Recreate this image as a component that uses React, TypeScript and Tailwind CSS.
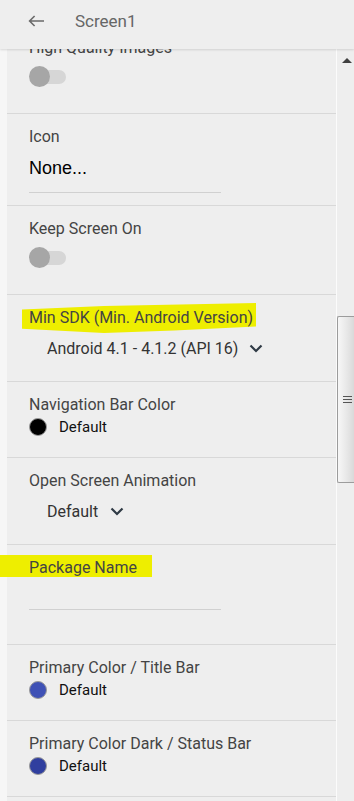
import React from "react";

const Label = ({ children }: { children: React.ReactNode }) => (
  <div className="pt-[13px] text-[16px] leading-[19px] text-[#444444]">{children}</div>
);

const Switch = () => (
  <div className="mt-[9px] relative w-[37px] h-[21px] flex items-center">
    <div className="absolute left-[1px] top-[4px] w-[36px] h-[14px] rounded-full bg-[#d6d6d6]" />
    <div className="relative w-[21px] h-[21px] rounded-full bg-[#a6a6a6]" />
  </div>
);

const Chevron = () => (
  <svg width="14" height="9" viewBox="0 0 14 9" className="shrink-0">
    <path d="M1.5 1.5L7 7L12.5 1.5" fill="none" stroke="#2f3a45" strokeWidth="2.2" />
  </svg>
);

const ColorRow = ({ color }: { color: string }) => (
  <div className="mt-[4px] flex items-center h-[18px]">
    <div className="w-[18px] h-[18px] rounded-full border border-[#9a9a9a]" style={{ backgroundColor: color }} />
    <span className="ml-[12px] text-[15px] leading-[18px] text-[#111111]">Default</span>
  </div>
);

export default function App() {
  return (
    <div className="w-[354px] h-[801px] overflow-hidden bg-[#eeeeee] flex flex-col font-['Roboto',sans-serif]">
      <header className="h-[49px] shrink-0 flex items-start relative z-10 bg-[#eeeeee] shadow-[0_1px_2px_rgba(0,0,0,0.12)]">
        <div className="ml-[28px] mt-[15px]">
          <svg width="17" height="12" viewBox="0 0 17 12">
            <path d="M16 6H1.6M6.6 1L1.6 6L6.6 11" fill="none" stroke="#6a6a6a" strokeWidth="1.6" />
          </svg>
        </div>
        <div className="ml-[30px] mt-[11px] text-[17px] leading-[20px] text-[#666666]">Screen1</div>
      </header>
      <div className="flex flex-1 min-h-0 overflow-hidden">
        <div className="w-[7px] shrink-0 bg-[#f6f6f6]" />
        <div className="w-[329px] shrink-0 relative">
          <div className="-mt-[24px] h-[89px] border-b border-[#d8d8d8] pl-[22px]">
            <Label>High Quality Images</Label>
            <Switch />
          </div>
          <div className="h-[92px] border-b border-[#d8d8d8] pl-[22px]">
            <Label>Icon</Label>
            <div className="mt-[12px] text-[18px] leading-[21px] text-black font-['Liberation_Sans',sans-serif]">None...</div>
            <div className="mt-[13px] w-[192px] h-px bg-[#d0d0d0]" />
          </div>
          <div className="h-[89px] border-b border-[#d8d8d8] pl-[22px]">
            <Label>Keep Screen On</Label>
            <Switch />
          </div>
          <div className="h-[87px] border-b border-[#d8d8d8] pl-[22px]">
            <Label>
              <span className="relative inline-block">
                <span className="absolute -left-[7px] -right-[3px] -top-[5px] -bottom-[6px] bg-[#eeee00] [clip-path:polygon(0_22%,35%_10%,100%_0,100%_78%,65%_92%,35%_100%,0_86%)]" />
                <span className="relative">Min SDK (Min. Android Version)</span>
              </span>
            </Label>
            <div className="mt-[12px] ml-[18px] flex items-center">
              <span className="text-[16px] leading-[19px] text-[#333333]">Android 4.1 - 4.1.2 (API 16)</span>
              <span className="ml-[11px]"><Chevron /></span>
            </div>
          </div>
          <div className="h-[76px] border-b border-[#d8d8d8] pl-[22px]">
            <Label>Navigation Bar Color</Label>
            <ColorRow color="#000000" />
          </div>
          <div className="h-[87px] border-b border-[#d8d8d8] pl-[22px]">
            <Label>Open Screen Animation</Label>
            <div className="mt-[12px] ml-[18px] flex items-center">
              <span className="text-[16px] leading-[19px] text-[#333333]">Default</span>
              <span className="ml-[12px]"><Chevron /></span>
            </div>
          </div>
          <div className="h-[100px] border-b border-[#d8d8d8] pl-[22px]">
            <Label>
              <span className="relative inline-block">
                <span className="absolute -left-[29px] -right-[15px] -top-[3px] bottom-0 bg-[#eeee00]" />
                <span className="relative">Package Name</span>
              </span>
            </Label>
            <div className="mt-[32px] w-[192px] h-px bg-[#d0d0d0]" />
          </div>
          <div className="h-[76px] border-b border-[#d8d8d8] pl-[22px]">
            <Label>Primary Color / Title Bar</Label>
            <ColorRow color="#3f51b5" />
          </div>
          <div className="h-[76px] border-b border-[#d8d8d8] pl-[22px]">
            <Label>Primary Color Dark / Status Bar</Label>
            <ColorRow color="#303f9f" />
          </div>
          <div className="h-[76px] pl-[22px]" />
        </div>
        <div className="w-px shrink-0 bg-[#fbfbfb]" />
        <div className="w-[17px] shrink-0 flex flex-col bg-[#eeeeee]">
          <div className="mt-[9px] ml-[5px]">
            <svg width="10" height="5" viewBox="0 0 10 5">
              <path d="M0 5L5 0L10 5Z" fill="#404040" />
            </svg>
          </div>
          <div className="mt-[253px] h-[167px] w-[17px] rounded-l-[2px] border border-r-0 border-[#9c9c9c] bg-[linear-gradient(to_right,#f7f7f7,#e6e6e6_60%,#d9d9d9)] flex flex-col items-center justify-center gap-[2px] pl-[2px]">
            <div className="w-[9px] h-px bg-[#555555]" />
            <div className="w-[9px] h-px bg-[#555555]" />
            <div className="w-[9px] h-px bg-[#555555]" />
          </div>
        </div>
      </div>
    </div>
  );
}
